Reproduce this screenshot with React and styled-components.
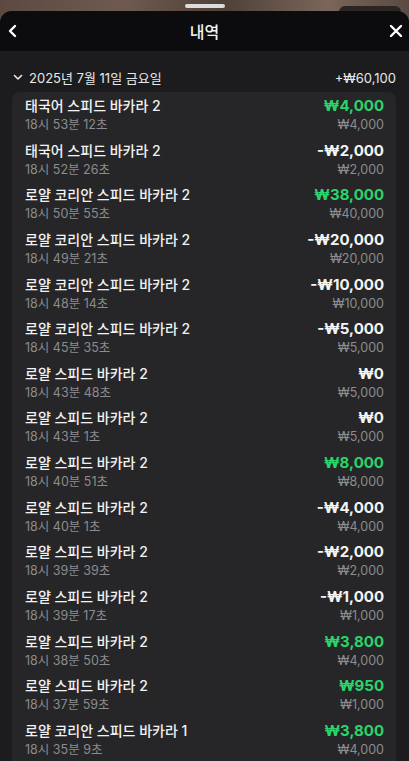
import styled, { createGlobalStyle } from 'styled-components';

const GlobalStyle = createGlobalStyle`
  * { box-sizing: border-box; }
  html, body { margin: 0; padding: 0; background: #1c1c1e; }
  body {
    font-family: Inter, "Noto Sans CJK KR", "Noto Sans", sans-serif;
    color: #f2f2f2;
    overflow: hidden;
  }
`;

const Page = styled.div`
  width: 409px;
  height: 761px;
  display: flex;
  flex-direction: column;
  overflow: hidden;
  background: linear-gradient(90deg, #5c4a42 0%, #6e5a50 30%, #4f4038 55%, #7a665a 80%, #5a4a42 100%);
`;

const Backdrop = styled.div`
  height: 11px;
  position: relative;
  flex-shrink: 0;
`;

const Handle = styled.div`
  position: absolute;
  left: 185px;
  top: 4px;
  width: 40px;
  height: 4px;
  border-radius: 2px;
  background: #dcdcdc;
`;

const Ghost = styled.div`
  position: absolute;
  right: 8px;
  top: 6px;
  width: 62px;
  height: 12px;
  border-radius: 8px;
  background: #2a2624;
`;

const Sheet = styled.div`
  flex: 1;
  position: relative;
  border-radius: 12px 12px 0 0;
  background: #1c1c1e;
  overflow: hidden;
  display: flex;
  flex-direction: column;
`;

const Header = styled.header`
  flex-shrink: 0;
  height: 40px;
  background: #0c0c0e;
  display: flex;
  align-items: center;
  justify-content: space-between;
  padding: 0 1px 0 1px;
`;

const Title = styled.h1`
  margin: 0;
  font-size: 16px;
  font-weight: 500;
  color: #f4f4f4;
`;

const IconButton = styled.button`
  width: 24px;
  height: 24px;
  border: 0;
  padding: 0;
  background: none;
  display: flex;
  align-items: center;
  justify-content: center;
  color: #fff;
`;

const Body = styled.div`
  flex-shrink: 0;
  padding: 13px 13px 0 12px;
`;

const DateRow = styled.div`
  height: 28px;
  display: flex;
  align-items: center;
  justify-content: space-between;
  padding: 0 0 1px 1px;
  font-size: 13px;
  color: #e8e8e8;
`;

const DateLabel = styled.div`
  display: flex;
  align-items: center;
  gap: 6px;
`;

const Card = styled.div`
  background: #262628;
  border-radius: 8px;
  padding: 0 12px 20px 13px;
`;

const Row = styled.div`
  height: 44.64px;
  display: flex;
  justify-content: space-between;
  padding-top: 4px;
`;

const Col = styled.div`
  display: flex;
  flex-direction: column;
  align-items: ${(p) => (p.$right ? 'flex-end' : 'flex-start')};
`;

const GameName = styled.div`
  font-size: 14px;
  line-height: 20px;
  font-weight: 500;
  color: #f2f2f2;
`;

const SubText = styled.div`
  font-size: 12.5px;
  line-height: 17px;
  color: #8c8c8e;
`;

const Amount = styled.div`
  font-size: 15px;
  line-height: 20px;
  font-weight: 700;
  color: ${(p) => (p.$win ? '#2bd46b' : '#f4f4f4')};
`;

const rows = [
  ['태국어 스피드 바카라 2', '18시 53분 12초', '₩4,000', '₩4,000', true],
  ['태국어 스피드 바카라 2', '18시 52분 26초', '-₩2,000', '₩2,000', false],
  ['로얄 코리안 스피드 바카라 2', '18시 50분 55초', '₩38,000', '₩40,000', true],
  ['로얄 코리안 스피드 바카라 2', '18시 49분 21초', '-₩20,000', '₩20,000', false],
  ['로얄 코리안 스피드 바카라 2', '18시 48분 14초', '-₩10,000', '₩10,000', false],
  ['로얄 코리안 스피드 바카라 2', '18시 45분 35초', '-₩5,000', '₩5,000', false],
  ['로얄 스피드 바카라 2', '18시 43분 48초', '₩0', '₩5,000', false],
  ['로얄 스피드 바카라 2', '18시 43분 1초', '₩0', '₩5,000', false],
  ['로얄 스피드 바카라 2', '18시 40분 51초', '₩8,000', '₩8,000', true],
  ['로얄 스피드 바카라 2', '18시 40분 1초', '-₩4,000', '₩4,000', false],
  ['로얄 스피드 바카라 2', '18시 39분 39초', '-₩2,000', '₩2,000', false],
  ['로얄 스피드 바카라 2', '18시 39분 17초', '-₩1,000', '₩1,000', false],
  ['로얄 스피드 바카라 2', '18시 38분 50초', '₩3,800', '₩4,000', true],
  ['로얄 스피드 바카라 2', '18시 37분 59초', '₩950', '₩1,000', true],
  ['로얄 코리안 스피드 바카라 1', '18시 35분 9초', '₩3,800', '₩4,000', true],
];

export default function App() {
  return (
    <Page>
      <GlobalStyle />
      <Backdrop>
        <Ghost />
        <Handle />
      </Backdrop>
      <Sheet>
        <Header>
          <IconButton aria-label="back">
            <svg width="12" height="14" viewBox="0 0 12 14" fill="none">
              <path d="M8 2L3 7l5 5" stroke="#fff" strokeWidth="2.4" strokeLinecap="round" strokeLinejoin="round" />
            </svg>
          </IconButton>
          <Title>내역</Title>
          <IconButton aria-label="close">
            <svg width="14" height="14" viewBox="0 0 14 14" fill="none">
              <path d="M2 2l10 10M12 2L2 12" stroke="#fff" strokeWidth="2.4" strokeLinecap="round" />
            </svg>
          </IconButton>
        </Header>
        <Body>
          <DateRow>
            <DateLabel>
              <svg width="10" height="7" viewBox="0 0 10 7" fill="none">
                <path d="M1.5 1.5L5 5l3.5-3.5" stroke="#e8e8e8" strokeWidth="1.6" strokeLinecap="round" strokeLinejoin="round" />
              </svg>
              2025년 7월 11일 금요일
            </DateLabel>
            <span>+₩60,100</span>
          </DateRow>
          <Card>
            {rows.map(([name, time, amount, bet, win], i) => (
              <Row key={i}>
                <Col>
                  <GameName>{name}</GameName>
                  <SubText>{time}</SubText>
                </Col>
                <Col $right>
                  <Amount $win={win}>{amount}</Amount>
                  <SubText>{bet}</SubText>
                </Col>
              </Row>
            ))}
          </Card>
        </Body>
      </Sheet>
    </Page>
  );
}
